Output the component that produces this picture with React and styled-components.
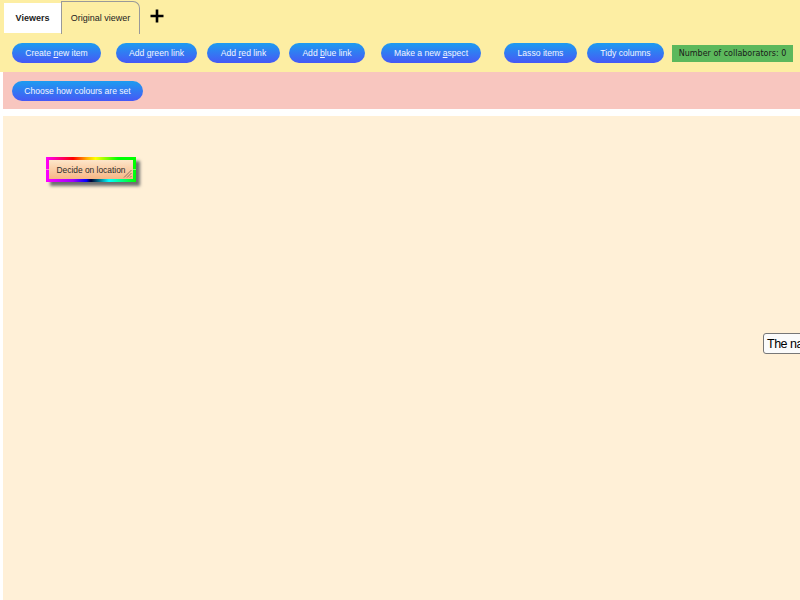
import React from "react";
import styled, { createGlobalStyle } from "styled-components";

const GlobalStyle = createGlobalStyle`
  html, body {
    margin: 0;
    padding: 0;
    background: #ffffff;
    overflow: hidden;
  }
  body {
    width: 800px;
    height: 600px;
  }
`;

const Page = styled.div`
  display: flex;
  flex-direction: column;
  width: 800px;
  height: 600px;
  font-family: "Liberation Sans", Arial, sans-serif;
`;

const Header = styled.div`
  background: #fdeea3;
  height: 72px;
  display: flex;
  flex-direction: column;
`;

const TabBar = styled.div`
  display: flex;
  align-items: flex-end;
  height: 34px;
  padding-left: 4px;
`;

const Tab = styled.div`
  display: flex;
  align-items: center;
  justify-content: center;
  box-sizing: border-box;
  height: ${(p) => (p.active ? "30px" : "33px")};
  margin-bottom: ${(p) => (p.active ? "1px" : "0")};
  width: ${(p) => p.width}px;
  font-size: 9px;
  color: #222;
  background: ${(p) => (p.active ? "#ffffff" : "#fdeea3")};
  border: ${(p) => (p.active ? "none" : "1px solid #999")};
  border-bottom: none;
  border-top-right-radius: ${(p) => (p.active ? "0" : "7px")};
  font-weight: ${(p) => (p.active ? "600" : "400")};
`;

const AddTab = styled.div`
  display: flex;
  align-items: center;
  justify-content: center;
  width: 34px;
  height: 33px;
  padding-bottom: 3px;
  box-sizing: border-box;
`;

const Toolbar = styled.div`
  display: flex;
  align-items: center;
  padding: 9px 0 0 12px;
  height: 20px;
`;

const Button = styled.div`
  display: flex;
  align-items: center;
  justify-content: center;
  box-sizing: border-box;
  height: 20px;
  width: ${(p) => p.width}px;
  margin-left: ${(p) => p.gap || 0}px;
  border-radius: 10px;
  background: linear-gradient(#1d9cf0, #4758f5);
  color: #f2f4ff;
  font-size: 8.6px;
  white-space: nowrap;

  u {
    text-decoration: underline;
  }
`;

const Counter = styled.div`
  display: flex;
  align-items: center;
  justify-content: center;
  height: 17px;
  width: 121px;
  margin-left: 8px;
  background: #5cb85c;
  color: #1a1a1a;
  font-family: "DejaVu Sans", Verdana, sans-serif;
  font-size: 8px;
`;

const ColourBar = styled.div`
  display: flex;
  align-items: center;
  margin-left: 3px;
  height: 37px;
  padding-left: 9px;
  background: #f8c6bf;
`;

const Canvas = styled.div`
  position: relative;
  margin: 7px 0 0 3px;
  flex: 1;
  background: #fff0d7;
  overflow: hidden;
`;

const Node = styled.div`
  position: absolute;
  left: ${(p) => p.x}px;
  top: ${(p) => p.y}px;
  width: ${(p) => p.w}px;
  height: ${(p) => p.h}px;
  box-sizing: border-box;
  padding: 3px;
  background:
    linear-gradient(to right, #ff00ff, #ff0000 30%, #ffaa00 45%, #ffff00 55%, #00ff00 80%, #00ff00) top / 100% 50% no-repeat,
    linear-gradient(to right, #ff00ff, #a000ff 30%, #0000ff 45%, #000030 50%, #00ffff 70%, #00ff00) bottom / 100% 50% no-repeat;
  box-shadow: 4px 4px 3px #6f6f6f;
`;

const NodeBody = styled.div`
  position: relative;
  display: flex;
  align-items: center;
  justify-content: center;
  height: 100%;
  background: linear-gradient(#fde6c9, #f8b685);
  color: #2a2a2a;
  font-size: 8.4px;
  white-space: nowrap;
`;

const Grip = styled.svg`
  position: absolute;
  right: 1px;
  bottom: 1px;
`;

const TextBox = styled.div`
  position: absolute;
  left: ${(p) => p.x}px;
  top: ${(p) => p.y}px;
  display: flex;
  align-items: center;
  height: 21px;
  box-sizing: border-box;
  padding: 0 3px;
  background: #fbfbfb;
  border: 1px solid #777;
  border-radius: 3px;
  font-family: "Liberation Sans", Arial, sans-serif;
  font-size: 12.5px;
  letter-spacing: -0.5px;
  color: #000;
  white-space: nowrap;
`;

function PlusIcon() {
  return (
    <svg width="14" height="14" viewBox="0 0 14 14">
      <path d="M7 0.5V13.5M0.5 7H13.5" stroke="#000" strokeWidth="2.6" />
    </svg>
  );
}

export default function App() {
  return (
    <Page>
      <GlobalStyle />
      <Header>
        <TabBar>
          <Tab active width={57}>Viewers</Tab>
          <Tab width={79}>Original viewer</Tab>
          <AddTab>
            <PlusIcon />
          </AddTab>
        </TabBar>
        <Toolbar>
          <Button width={89}>
            Create&nbsp;<u>n</u>ew item
          </Button>
          <Button width={81} gap={15}>
            Add&nbsp;<u>g</u>reen link
          </Button>
          <Button width={73} gap={10}>
            Add&nbsp;<u>r</u>ed link
          </Button>
          <Button width={76} gap={9}>
            Add&nbsp;<u>b</u>lue link
          </Button>
          <Button width={100} gap={16}>
            Make a new&nbsp;<u>a</u>spect
          </Button>
          <Button width={73} gap={23}>
            Lasso items
          </Button>
          <Button width={77} gap={10}>
            Tidy columns
          </Button>
          <Counter>Number of collaborators: 0</Counter>
        </Toolbar>
      </Header>
      <ColourBar>
        <Button width={131}>Choose how colours are set</Button>
      </ColourBar>
      <Canvas>
        <Node x={43} y={41} w={90} h={25}>
          <NodeBody>
            Decide on location
            <Grip width="9" height="9" viewBox="0 0 9 9">
              <path d="M8.5 1L1 8.5M8.5 4L4 8.5M8.5 7L7 8.5" stroke="#7a5a50" strokeWidth="0.8" />
            </Grip>
          </NodeBody>
        </Node>
        <TextBox x={760} y={217}>The name</TextBox>
      </Canvas>
    </Page>
  );
}
